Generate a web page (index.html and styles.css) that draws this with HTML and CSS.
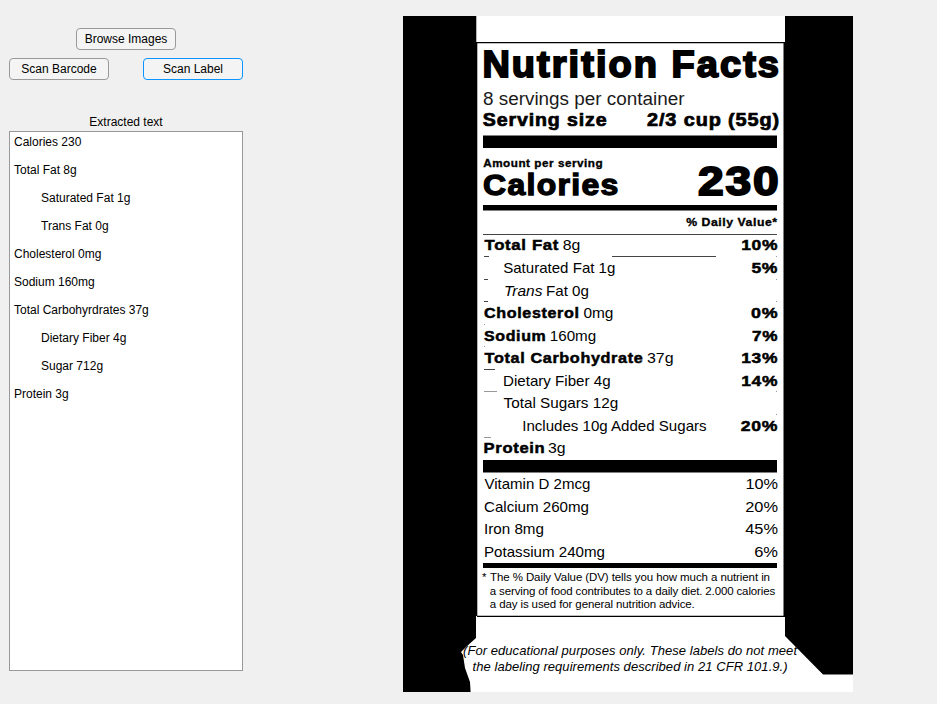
FILE: index.html
```html
<!DOCTYPE html>
<html lang="en">
<head>
<meta charset="utf-8">
<title>Nutrition label scanner</title>
<link rel="stylesheet" href="styles.css">
</head>
<body>
<main class="window">
  <section class="controls">
    <button class="btn">Browse Images</button>
    <div class="scan-row">
      <button class="btn">Scan Barcode</button>
      <button class="btn focused">Scan Label</button>
    </div>
    <h1 class="caption">Extracted text</h1>
    <ul class="output">
      <li>Calories 230</li>
      <li>Total Fat 8g</li>
      <li class="sub">Saturated Fat 1g</li>
      <li class="sub">Trans Fat 0g</li>
      <li>Cholesterol 0mg</li>
      <li>Sodium 160mg</li>
      <li>Total Carbohyrdrates 37g</li>
      <li class="sub">Dietary Fiber 4g</li>
      <li class="sub">Sugar 712g</li>
      <li>Protein 3g</li>
    </ul>
  </section>
  <svg class="preview" viewBox="403 16 450 676" width="450" height="676">
    <rect x="403" y="16" width="450" height="676" fill="#fff"/>
    <!-- dark surroundings of the label -->
    <path d="M403 16H476.3V42H477.3V616H476V638L466 647L461 652L463 655L465 668L470 682L470.6 692H403Z"/>
    <path d="M853 16H785V42H783.5V616H785V636L823 674.5H853Z"/>
    <!-- frame and rules -->
    <path d="M476 42h309v1.3h-309zM477 615.8h308v1.2h-308z"/>
    <path d="M483 135.4h294v12.5h-294zM483 205h294v5.6h-294zM483 460h294v12.5h-294zM483 563h294v5h-294z"/>
    <path class="rule" d="M483 234h294v1h-294zM484 256h5v1h-5zM612 256h104v1h-104zM484 279h4v1h-4zM484 301h4v1h-4zM484 369h11v1h-11z"/>
    <path class="faint" d="M484 391h13v1h-13zM484 437h7v1h-7zM484 324h1v1h-1zM484 346h1v1h-1zM776 256h1v1h-1zM776 279h1v1h-1zM776 301h1v1h-1zM776 391h1v1h-1zM776 414h1v1h-1z"/>

    <g class="black">
      <text class="s37" x="482.4" y="76.8" textLength="298.6" lengthAdjust="spacingAndGlyphs">Nutrition Facts</text>
      <text class="s18" x="482.8" y="126.2" textLength="124.6" lengthAdjust="spacingAndGlyphs">Serving size</text>
      <text class="s18" x="647" y="126.2" textLength="133" lengthAdjust="spacingAndGlyphs">2/3 cup (55g)</text>
      <text class="s11" x="483.2" y="166.6" textLength="120" lengthAdjust="spacingAndGlyphs">Amount per serving</text>
      <text class="s29" x="483" y="195.2" textLength="136.6" lengthAdjust="spacingAndGlyphs">Calories</text>
      <text class="s40" x="698" y="195.2" textLength="82.6" lengthAdjust="spacingAndGlyphs">230</text>
      <text class="s11" x="686.2" y="226.2" textLength="91.4" lengthAdjust="spacingAndGlyphs">% Daily Value*</text>
    </g>
    <text class="light" x="483" y="105.3" textLength="201.5" lengthAdjust="spacingAndGlyphs">8 servings per container</text>

    <g class="black s15">
      <text x="484.6" y="250.4" textLength="74.4" lengthAdjust="spacingAndGlyphs">Total Fat</text>
      <text x="484" y="318.2" textLength="95.6" lengthAdjust="spacingAndGlyphs">Cholesterol</text>
      <text x="484" y="340.8" textLength="62.4" lengthAdjust="spacingAndGlyphs">Sodium</text>
      <text x="484.6" y="363.2" textLength="158.8" lengthAdjust="spacingAndGlyphs">Total Carbohydrate</text>
      <text x="483.6" y="453.2" textLength="61.8" lengthAdjust="spacingAndGlyphs">Protein</text>
      <text x="741.2" y="250.4" textLength="37" lengthAdjust="spacingAndGlyphs">10%</text>
      <text x="751.4" y="273" textLength="26.8" lengthAdjust="spacingAndGlyphs">5%</text>
      <text x="751" y="318.2" textLength="27.2" lengthAdjust="spacingAndGlyphs">0%</text>
      <text x="752" y="340.8" textLength="26.2" lengthAdjust="spacingAndGlyphs">7%</text>
      <text x="741.2" y="363.2" textLength="37" lengthAdjust="spacingAndGlyphs">13%</text>
      <text x="741.2" y="385.8" textLength="37" lengthAdjust="spacingAndGlyphs">14%</text>
      <text x="740.8" y="430.8" textLength="37.4" lengthAdjust="spacingAndGlyphs">20%</text>
    </g>

    <g class="regular">
      <text x="562.8" y="250.4" textLength="17.6" lengthAdjust="spacingAndGlyphs">8g</text>
      <text x="503.2" y="273" textLength="112.2" lengthAdjust="spacingAndGlyphs">Saturated Fat 1g</text>
      <text class="italic" x="504" y="295.6" textLength="38.4" lengthAdjust="spacingAndGlyphs">Trans</text>
      <text x="546" y="295.6" textLength="43" lengthAdjust="spacingAndGlyphs">Fat 0g</text>
      <text x="583.4" y="318.2" textLength="30" lengthAdjust="spacingAndGlyphs">0mg</text>
      <text x="549.8" y="340.8" textLength="46.4" lengthAdjust="spacingAndGlyphs">160mg</text>
      <text x="647" y="363.2" textLength="26.6" lengthAdjust="spacingAndGlyphs">37g</text>
      <text x="503" y="385.8" textLength="107.6" lengthAdjust="spacingAndGlyphs">Dietary Fiber 4g</text>
      <text x="503.6" y="408.4" textLength="114.6" lengthAdjust="spacingAndGlyphs">Total Sugars 12g</text>
      <text x="522.2" y="430.8" textLength="184.4" lengthAdjust="spacingAndGlyphs">Includes 10g Added Sugars</text>
      <text x="548" y="453.2" textLength="17.6" lengthAdjust="spacingAndGlyphs">3g</text>
      <text x="484.4" y="489" textLength="106" lengthAdjust="spacingAndGlyphs">Vitamin D 2mcg</text>
      <text x="484" y="511.6" textLength="105" lengthAdjust="spacingAndGlyphs">Calcium 260mg</text>
      <text x="484" y="534.2" textLength="60" lengthAdjust="spacingAndGlyphs">Iron 8mg</text>
      <text x="484" y="556.6" textLength="121" lengthAdjust="spacingAndGlyphs">Potassium 240mg</text>
      <text x="745.4" y="489" textLength="32.6" lengthAdjust="spacingAndGlyphs">10%</text>
      <text x="745.2" y="511.6" textLength="32.8" lengthAdjust="spacingAndGlyphs">20%</text>
      <text x="745.2" y="534.2" textLength="32.8" lengthAdjust="spacingAndGlyphs">45%</text>
      <text x="754.2" y="556.6" textLength="23.8" lengthAdjust="spacingAndGlyphs">6%</text>
    </g>

    <g class="note">
      <text x="482" y="581.4">*</text>
      <text x="490" y="581.4" textLength="280">The % Daily Value (DV) tells you how much a nutrient in</text>
      <text x="489.8" y="595" textLength="285.4">a serving of food contributes to a daily diet. 2.000 calories</text>
      <text x="489.8" y="608.2" textLength="205">a day is used for general nutrition advice.</text>
    </g>
    <g class="disclaimer">
      <text x="463" y="655" textLength="334">(For educational purposes only. These labels do not meet</text>
      <text x="472.6" y="671" textLength="315">the labeling requirements described in 21 CFR 101.9.)</text>
    </g>
  </svg>
</main>
</body>
</html>
```

FILE: styles.css
```css
* { box-sizing: border-box; }

body {
  margin: 0;
  background: #f0f0f0;
  color: #000;
  font: 12px/14px "Liberation Sans", Arial, sans-serif;
}

.window {
  display: flex;
  align-items: flex-start;
  gap: 160px;
  width: 937px;
  height: 704px;
  padding: 16px 84px 12px 9px;
  overflow: hidden;
}

.controls {
  display: flex;
  flex-direction: column;
  align-items: center;
  width: 234px;
  padding-top: 12px;
}

.btn {
  width: 100px;
  height: 22px;
  padding: 0;
  border: 1px solid #999;
  border-radius: 4px;
  background: #f4f4f4;
  color: #000;
  font: inherit;
}

.btn.focused { border-color: #0a95ff; }

.scan-row {
  display: flex;
  justify-content: space-between;
  width: 100%;
  margin-top: 8px;
}

.caption {
  margin: 35px 0 2px;
  font: inherit;
}

.output {
  width: 234px;
  height: 540px;
  margin: 0;
  padding: 3px 4px;
  border: 1px solid #999;
  background: #fff;
  list-style: none;
}

.output li { height: 28px; }
.output .sub { padding-left: 27px; }

.preview {
  display: block;
  flex: none;
  font-family: "Liberation Sans", Arial, sans-serif;
}

.rule { fill: #444; }
.faint { fill: #999; }

/* heavy grotesque: bold thickened with an outline */
.black {
  font-weight: 700;
  stroke: #000;
  stroke-width: .5px;
}

.s11 { font-size: 11px; stroke-width: .35px; letter-spacing: .5px; }
.s15 { font-size: 15px; letter-spacing: .6px; }
.s18 { font-size: 18px; stroke-width: .7px; letter-spacing: .8px; }
.s29 { font-size: 29px; stroke-width: 1.3px; letter-spacing: 1.2px; }
.s37 { font-size: 37px; stroke-width: 1.9px; letter-spacing: 2px; }
.s40 { font-size: 40px; stroke-width: 1.9px; letter-spacing: 1.6px; }

.light { font-size: 18px; fill: #1a1a1a; }
.regular { font-size: 15px; }
.italic { font-style: italic; }
.note { font-size: 11.5px; }
.disclaimer { font-size: 13px; font-style: italic; }
```
